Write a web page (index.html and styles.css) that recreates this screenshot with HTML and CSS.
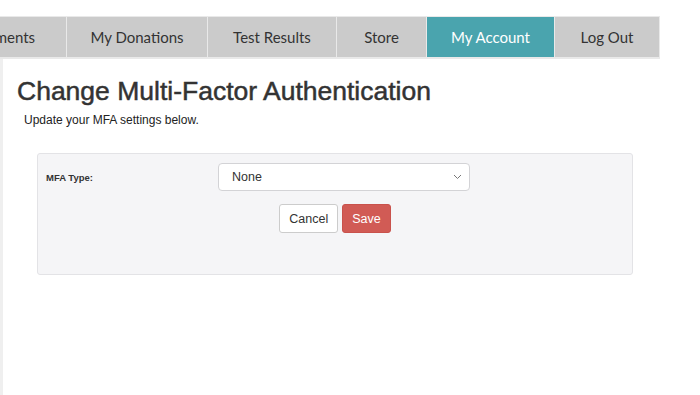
FILE: index.html
```html
<!DOCTYPE html>
<html lang="en">
<head>
    <meta charset="UTF-8">
    <meta name="viewport" content="width=device-width, initial-scale=1.0">
    <title>Change Multi-Factor Authentication</title>
    <link rel="stylesheet" href="styles.css">
</head>
<body>
    <div class="nav">
        <a class="tab tab-first" href="#">Appointments</a>
        <a class="tab tab-donations" href="#">My Donations</a>
        <a class="tab tab-results" href="#">Test Results</a>
        <a class="tab tab-store" href="#">Store</a>
        <a class="tab tab-account active" href="#">My Account</a>
        <a class="tab tab-logout" href="#">Log Out</a>
    </div>

    <div class="main">
        <h1>Change Multi-Factor Authentication</h1>
        <p class="intro">Update your MFA settings below.</p>

        <div class="panel">
            <div class="row">
                <label for="mfaType">MFA Type:</label>
                <div class="select-wrap">
                    <select id="mfaType">
                        <option>None</option>
                        <option>Text Message</option>
                        <option>Email</option>
                    </select>
                    <svg class="chevron" width="9" height="6" viewBox="0 0 9 6"><path d="M1 1l3.5 3.5L8 1" fill="none" stroke="#777" stroke-width="1"/></svg>
                </div>
            </div>
            <div class="actions">
                <button class="btn btn-cancel">Cancel</button>
                <button class="btn btn-save">Save</button>
            </div>
        </div>
    </div>
</body>
</html>
```

FILE: styles.css
```css
html, body {
    margin: 0;
    padding: 0;
    background-color: #fff;
}

body {
    font-family: "Liberation Sans", Arial, sans-serif;
    color: #333;
    overflow: hidden;
    height: 395px;
}

.nav {
    display: flex;
    margin-top: 16px;
    margin-left: -89px;
    width: 749px;
    height: 43px;
    background-color: #e9e9e9;
    gap: 1px;
    border-top: 1px solid #e9e9e9;
    border-right: 1px solid #e9e9e9;
    box-sizing: border-box;
}

.tab {
    display: flex;
    align-items: center;
    justify-content: center;
    height: 41px;
    background-color: #cbcbcb;
    color: #333;
    text-decoration: none;
    font-family: Lato, "Open Sans", sans-serif;
    font-size: 15px;
    border-bottom: 1px solid #e9e9e9;
    box-sizing: border-box;
}

.tab-first { width: 155px; }
.tab-donations { width: 140px; }
.tab-results { width: 128px; }
.tab-store { width: 89px; }
.tab-account { width: 127px; }
.tab-logout { width: 104px; }

.tab.active {
    background-color: #4aa4ae;
    color: #fff;
}

.main {
    border-left: 3px solid #efefef;
    padding: 1px 0 0 14px;
    height: 340px;
}

h1 {
    font-size: 26.5px;
    font-weight: normal;
    -webkit-text-stroke: 0.5px #333;
    margin: 16px 0 0 0;
    color: #333;
}

.intro {
    font-size: 12px;
    margin: 6px 0 0 7px;
    color: #222;
}

.panel {
    margin: 26px 67px 0 20px;
    height: 122px;
    box-sizing: border-box;
    background-color: #f5f5f7;
    border: 1px solid #e3e3e6;
    border-radius: 3px;
    padding: 9px 0 0 8px;
}

.row {
    display: flex;
    align-items: center;
}

.row label {
    width: 172px;
    font-size: 9.5px;
    font-weight: bold;
    color: #333;
}

.select-wrap {
    position: relative;
}

select {
    width: 252px;
    height: 28px;
    -webkit-appearance: none;
    appearance: none;
    background-color: #fff;
    border: 1px solid #d3d3d6;
    border-radius: 4px;
    padding: 0 0 0 13px;
    font-family: "Liberation Sans", Arial, sans-serif;
    font-size: 12.5px;
    color: #333;
}

.chevron {
    position: absolute;
    right: 8px;
    top: 11px;
    pointer-events: none;
}

.actions {
    display: flex;
    justify-content: center;
    gap: 4px;
    margin-top: 13px;
    padding-right: 8px;
}

.btn {
    height: 29px;
    padding: 0 9px;
    font-family: "Liberation Sans", Arial, sans-serif;
    font-size: 12.5px;
    border-radius: 3px;
    cursor: pointer;
}

.btn-cancel {
    background-color: #fff;
    border: 1px solid #ccc;
    color: #333;
}

.btn-save {
    background-color: #d15b55;
    border: 1px solid #c9524c;
    color: #fff;
}
```
